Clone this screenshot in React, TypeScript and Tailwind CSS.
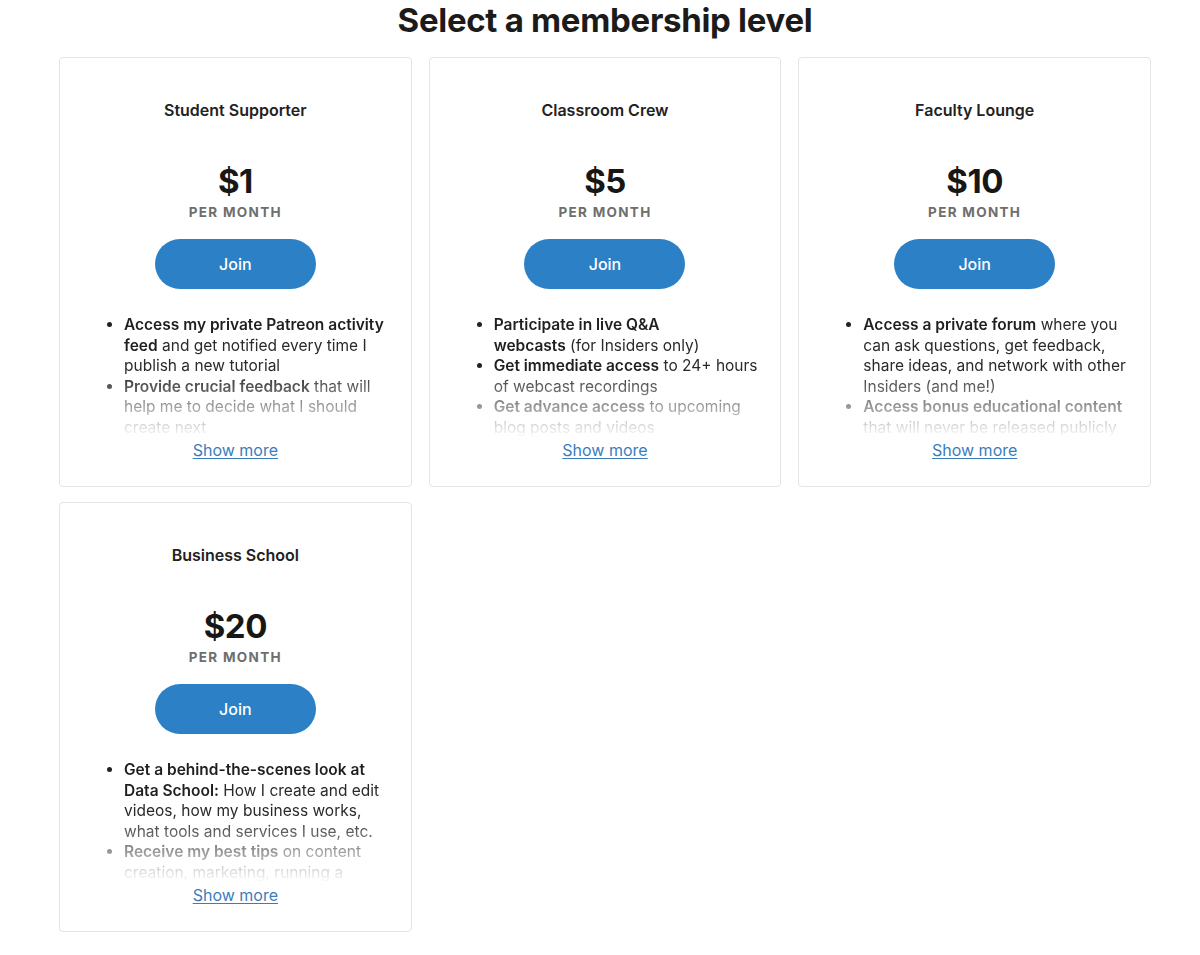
import React from 'react'

interface Perk {
  bold: React.ReactNode
  rest: string
}

interface Tier {
  name: string
  price: string
  perks: Perk[]
}

const tiers: Tier[] = [
  {
    name: 'Student Supporter',
    price: '$1',
    perks: [
      { bold: 'Access my private Patreon activity feed', rest: ' and get notified every time I publish a new tutorial' },
      { bold: 'Provide crucial feedback', rest: ' that will help me to decide what I should create next' },
    ],
  },
  {
    name: 'Classroom Crew',
    price: '$5',
    perks: [
      { bold: <>Participate in live Q&amp;A<br />webcasts</>, rest: ' (for Insiders only)' },
      { bold: 'Get immediate access', rest: ' to 24+ hours of webcast recordings' },
      { bold: 'Get advance access', rest: ' to upcoming blog posts and videos' },
    ],
  },
  {
    name: 'Faculty Lounge',
    price: '$10',
    perks: [
      { bold: 'Access a private forum', rest: ' where you can ask questions, get feedback, share ideas, and network with other Insiders (and me!)' },
      { bold: 'Access bonus educational content', rest: ' that will never be released publicly' },
    ],
  },
  {
    name: 'Business School',
    price: '$20',
    perks: [
      { bold: 'Get a behind-the-scenes look at Data School:', rest: ' How I create and edit videos, how my business works, what tools and services I use, etc.' },
      { bold: 'Receive my best tips', rest: ' on content creation, marketing, running a business, and more' },
    ],
  },
]

function TierCard({ tier }: { tier: Tier }) {
  return (
    <div className="h-[430px] rounded-[4px] border border-[#e4e4e4] bg-white pt-[42px] flex flex-col items-center">
      <h3 className="text-[16px] leading-5 font-semibold text-[#222222]">{tier.name}</h3>
      <div className="mt-[41px] text-[33px] leading-10 font-bold text-[#181715] tracking-[-0.5px]">{tier.price}</div>
      <div className="mt-[2px] text-[13.5px] leading-[18px] font-bold tracking-[1.3px] text-[#6e6e6e]">PER MONTH</div>
      <button className="mt-[18px] h-[50px] w-[161px] rounded-full bg-[#2b80c6] text-[16px] font-medium text-white">
        Join
      </button>
      {/* 説明リスト（下がフェードアウト） */}
      <div className="mt-[26px] h-[123px] w-full overflow-hidden pl-[64px] pr-[20px] [mask-image:linear-gradient(to_bottom,black_45%,transparent_100%)] [-webkit-mask-image:linear-gradient(to_bottom,black_45%,transparent_100%)]">
        <ul className="list-disc text-[15.5px] leading-[20.5px] text-[#2a2a2a] marker:text-[#222]">
          {tier.perks.map((p, i) => (
            <li key={i}>
              <span className="font-semibold text-[#1f1f1f]">{p.bold}</span>
              {p.rest}
            </li>
          ))}
        </ul>
      </div>
      <a href="#" className="mt-[2px] text-[16px] leading-5 text-[#3a7dbd] underline underline-offset-2">
        Show more
      </a>
    </div>
  )
}

export default function App() {
  return (
    <div className="min-h-screen bg-white" style={{ fontFamily: 'Inter, "Noto Sans", sans-serif' }}>
      <div className="ml-[59px] w-[1092px]">
        <h1 className="h-[40px] text-center text-[33px] leading-10 font-bold text-[#1c1b19] tracking-[-0.3px]">
          Select a membership level
        </h1>
        <div className="mt-[17px] grid grid-cols-3 gap-x-[17px] gap-y-[15px]">
          {tiers.map((t) => (
            <TierCard key={t.name} tier={t} />
          ))}
        </div>
      </div>
    </div>
  )
}
